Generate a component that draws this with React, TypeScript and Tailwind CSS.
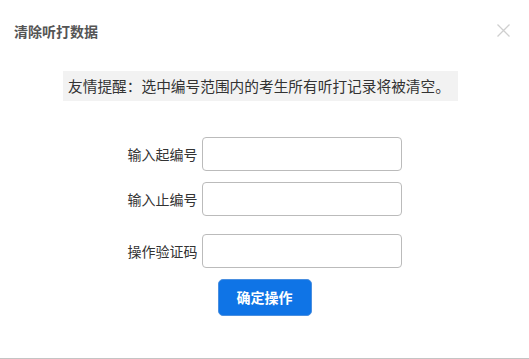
import React from "react";

const font = { fontFamily: '"Noto Sans CJK SC", "Noto Sans", sans-serif' };

function Row({ label, className }: { label: string; className: string }) {
  return (
    <div className={`flex items-center justify-center ${className}`}>
      <span className="w-[70px] text-[14px] text-[#333] whitespace-nowrap leading-none">{label}</span>
      <input className="ml-[4px] w-[200px] h-[34px] border border-[#bbbbbb] rounded-[4px] bg-white outline-none" />
    </div>
  );
}

export default function App() {
  return (
    <div
      className="relative w-[529px] h-[359px] bg-white border-b border-[#c4c4c4] overflow-hidden"
      style={font}
    >
      <div className="pt-[22px] pl-[14px] text-[14px] leading-[18px] font-bold text-[#555]">清除听打数据</div>
      <button className="absolute left-[497px] top-[24px] w-[13px] h-[13px]">
        <svg width="13" height="13" viewBox="0 0 13 13">
          <path d="M0.5 0.5 L12.5 12.5 M12.5 0.5 L0.5 12.5" stroke="#cfcfcf" strokeWidth="1.3" fill="none" />
        </svg>
      </button>
      <div className="mt-[31px] ml-[63px] w-[395px] h-[30px] bg-[#f2f2f2] pl-[5px] flex items-center text-[14.7px] text-[#333] whitespace-nowrap">
        友情提醒：选中编号范围内的考生所有听打记录将被清空。
      </div>
      <Row label="输入起编号" className="mt-[36px]" />
      <Row label="输入止编号" className="mt-[11px]" />
      <Row label="操作验证码" className="mt-[18px]" />
      <div className="mt-[11px] flex justify-center">
        <button className="w-[94px] h-[37px] bg-[#0f74e6] border border-[#4a8fe0] rounded-[5px] text-white text-[14px] font-bold">
          确定操作
        </button>
      </div>
    </div>
  );
}
